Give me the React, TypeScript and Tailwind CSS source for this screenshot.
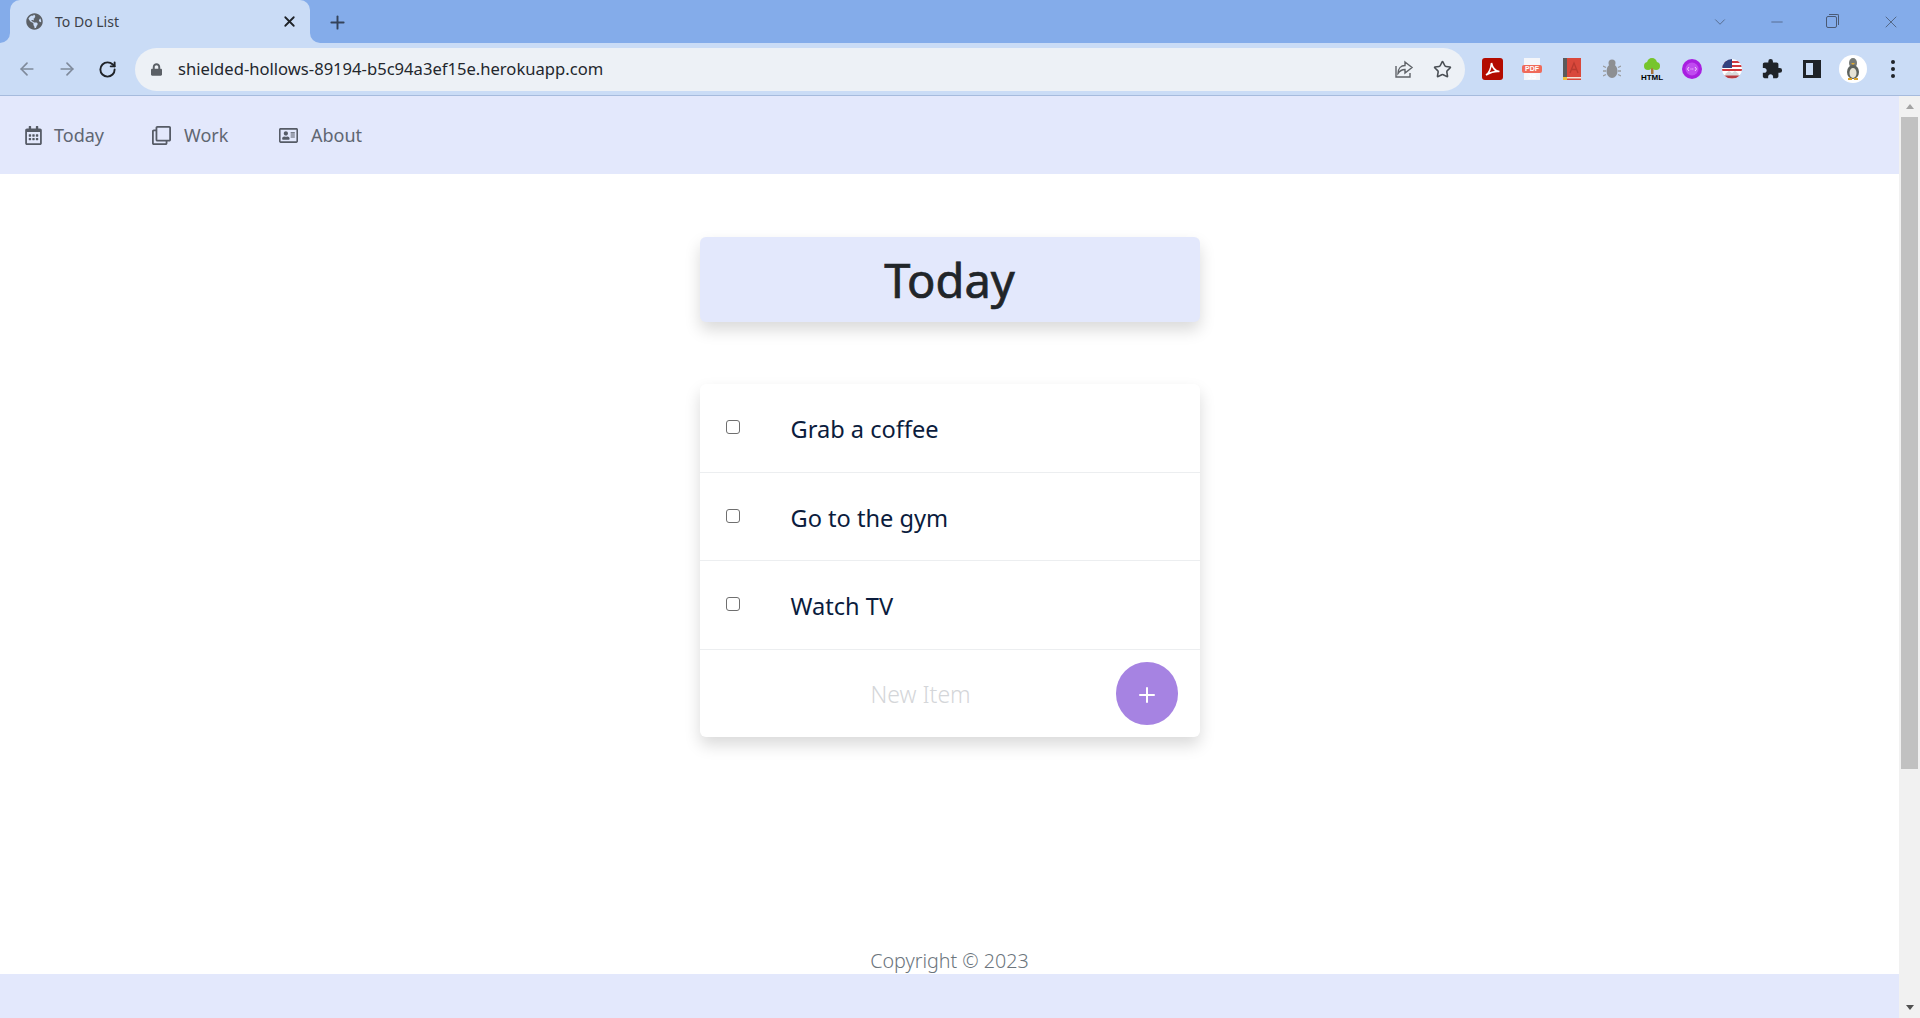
import { FaRegCalendarAlt, FaRegClone, FaRegAddressCard, FaGlobeAmericas, FaLock } from 'react-icons/fa'
import { MdExtension } from 'react-icons/md'
import { ArrowLeft, ArrowRight, RotateCw, X, Plus, Star, ChevronDown, Minus } from 'lucide-react'

const navItems = [
  { label: 'Today', icon: FaRegCalendarAlt, width: 'w-[128px]', gap: 'ml-[11px]' },
  { label: 'Work', icon: FaRegClone, width: 'w-[127px]', gap: 'ml-[13px]' },
  { label: 'About', icon: FaRegAddressCard, width: 'w-auto', gap: 'ml-[13px]' },
]

const todos = ['Grab a coffee', 'Go to the gym', 'Watch TV']

function ExtensionIcons() {
  return (
    <div className="flex items-center">
      {/* pdf */}
      <span className="w-10 flex justify-center">
        <svg width="21" height="22" viewBox="0 0 21 22">
          <rect width="21" height="22" rx="3" fill="#b30b00" />
          <path d="M4 17c3-2 5-7 5.500-12 1 5 3 8 8 8.500-5-.5-9 1-13.500 3.500z" fill="none" stroke="#fff" strokeWidth="1.600" />
        </svg>
      </span>
      <span className="w-10 flex justify-center">
        <span className="relative w-[16px] h-[22px] bg-[#f4f6fa] flex items-center justify-center">
          <span className="absolute left-[-2px] right-[-2px] top-[7px] h-[8px] rounded-[2px] bg-[#ef6a5a] text-white text-[7px] leading-[8px] font-bold text-center font-['Liberation_Sans',sans-serif]">PDF JS</span>
        </span>
      </span>
      <span className="w-10 flex justify-center">
        <svg width="18" height="22" viewBox="0 0 18 22">
          <rect width="18" height="22" fill="#d9483b" />
          <rect width="4" height="20" fill="#5b5b5b" />
          <rect x="4" y="19" width="14" height="1.500" fill="#f4e3d8" />
          <rect y="19" width="4" height="3" fill="#f0c23a" />
          <path d="M7 15l4-10 4 10M8.500 11.500h5" fill="none" stroke="#b93a2f" strokeWidth="1.300" />
        </svg>
      </span>
      <span className="w-10 flex justify-center">
        <svg width="18" height="20" viewBox="0 0 18 20">
          <circle cx="9" cy="4" r="3.500" fill="#8d8f92" />
          <ellipse cx="9" cy="12" rx="5.500" ry="7" fill="#8d8f92" />
          <path d="M0 7l3 1.500M0 12h3M0 17l3-1.500M18 7l-3 1.500M18 12h-3M18 17l-3-1.500" stroke="#9a9c9f" strokeWidth="1.300" />
        </svg>
      </span>
      <span className="w-10 flex flex-col items-center">
        <svg width="20" height="16" viewBox="0 0 20 16">
          <rect x="9" y="8" width="2.500" height="8" fill="#a9743a" />
          <circle cx="10" cy="5" r="5" fill="#76c52c" />
          <circle cx="6" cy="8" r="4" fill="#76c52c" />
          <circle cx="14" cy="8" r="4" fill="#76c52c" />
        </svg>
        <span className="text-[8px] leading-[7px] font-bold text-black font-['Liberation_Sans',sans-serif]">HTML</span>
      </span>
      <span className="w-10 flex justify-center">
        <svg width="20" height="20" viewBox="0 0 20 20">
          <circle cx="10" cy="10" r="10" fill="#a81fe0" />
          <circle cx="10" cy="10" r="6.500" fill="#c04cf0" />
          <path d="M7 8l-1.500 2L7 12M13 8l1.500 2-1.500 2" fill="none" stroke="#f1d3fb" strokeWidth="1" />
          <path d="M8.500 10h3" stroke="#f1d3fb" strokeWidth="1" strokeDasharray="1 .8" />
        </svg>
      </span>
      <span className="w-10 flex justify-center">
        <svg width="20" height="20" viewBox="0 0 20 20">
          <clipPath id="flag"><circle cx="10" cy="10" r="10" /></clipPath>
          <g clipPath="url(#flag)">
            <rect width="20" height="20" fill="#fff" />
            <path d="M0 3h20M0 7h20M0 11h20" stroke="#d03a3f" strokeWidth="2" />
            <rect width="10" height="9" fill="#33427f" />
            <path d="M3 15l4-3 3 2 3-2 4 3-3 4H6z" fill="#d9d9d9" />
            <path d="M0 18h20" stroke="#b83a40" strokeWidth="3" />
          </g>
        </svg>
      </span>
      <span className="w-10 flex justify-center">
        <MdExtension className="w-[22px] h-[22px] text-[#1f2328]" />
      </span>
      <span className="w-10 flex justify-center">
        <span className="w-[18px] h-[18px] border-[3px] border-r-[8px] border-[#1f2328] bg-[#cadcf6]" />
      </span>
      <span className="w-10 flex justify-center pl-[2px]">
        <span className="w-7 h-7 rounded-full bg-white flex items-center justify-center">
          <svg width="14" height="22" viewBox="0 0 14 22">
            <ellipse cx="7" cy="5" rx="4" ry="5" fill="#777b77" />
            <ellipse cx="7" cy="14" rx="6" ry="7" fill="#5d625e" />
            <ellipse cx="7" cy="15" rx="3.500" ry="5" fill="#e6e3d6" />
            <path d="M5 5h4l-2 2z" fill="#e0a92e" />
            <path d="M2 21h4M8 21h4" stroke="#d9a22c" strokeWidth="2" />
          </svg>
        </span>
      </span>
      <span className="w-10 flex flex-col items-center gap-[3px] pl-[1px]">
        <span className="w-1 h-1 rounded-full bg-[#1f2328]" />
        <span className="w-1 h-1 rounded-full bg-[#1f2328]" />
        <span className="w-1 h-1 rounded-full bg-[#1f2328]" />
      </span>
    </div>
  )
}

function BrowserChrome() {
  return (
    <div className="shrink-0 font-['Noto_Sans',sans-serif]">
      {/* Tab strip */}
      <div className="h-[43px] bg-[#84acea] flex items-end pl-[10px]">
        <div className="relative w-[300px] h-[43px] bg-[#cadcf6] rounded-t-[10px] flex items-center pl-[16px] pr-[12px]">
          <div className="absolute left-[-10px] bottom-0 w-[10px] h-[10px] bg-[#cadcf6]">
            <div className="w-full h-full bg-[#84acea] rounded-br-[10px]" />
          </div>
          <div className="absolute right-[-10px] bottom-0 w-[10px] h-[10px] bg-[#cadcf6]">
            <div className="w-full h-full bg-[#84acea] rounded-bl-[10px]" />
          </div>
          <FaGlobeAmericas className="w-[17px] h-[17px] text-[#5b6066] shrink-0" />
          <span className="ml-[12px] mb-[1px] text-[14px] text-[#3c4148] flex-1">To Do List</span>
          <X className="w-[17px] h-[17px] text-[#1f2328]" strokeWidth={2.5} />
        </div>
        <Plus className="ml-[17px] mb-[10px] w-[21px] h-[21px] text-[#34435a]" strokeWidth={2.2} />
        <div className="flex-1" />
        <div className="h-[43px] flex items-center text-[#4a5a75]">
          <ChevronDown className="w-[18px] h-[18px] mr-[39px]" strokeWidth={1} />
          <Minus className="w-[18px] h-[18px] mr-[40px]" strokeWidth={1} />
          <span className="relative w-[11px] h-[12px] mr-[44px] border border-[#4a5a75] rounded-[2px]">
            <span className="absolute top-[-3px] right-[-3px] w-[10px] h-[11px] border-t border-r border-[#4a5a75] rounded-tr-[2px]" />
          </span>
          <X className="w-[20px] h-[20px] mr-[19px]" strokeWidth={1} />
        </div>
      </div>
      {/* Toolbar */}
      <div className="h-[53px] bg-[#cadcf6] border-b border-[#a6bbdd] flex items-center">
        <div className="w-[135px] pl-[17px] flex items-center shrink-0">
          <ArrowLeft className="w-[20px] h-[20px] text-[#7f8a9b]" strokeWidth={2} />
          <ArrowRight className="ml-[20px] w-[20px] h-[20px] text-[#7f8a9b]" strokeWidth={2} />
          <RotateCw className="ml-[21px] w-[19px] h-[19px] text-[#1f2328]" strokeWidth={2.4} />
        </div>
        <div className="w-[1330px] h-[43px] rounded-full bg-[#edf1f6] flex items-center pl-[16px] pr-[13px]">
          <FaLock className="w-[11px] h-[13px] text-[#5b6066]" />
          <span className="ml-[16px] mt-[1px] flex-1 text-[16.6px] text-[#23272d]">shielded-hollows-89194-b5c94a3ef15e.herokuapp.com</span>
          <svg width="20" height="20" viewBox="0 0 20 20" fill="none" stroke="#5f6368" strokeWidth="1.400" className="mr-[19px]">
            <path d="M2 7v11h14v-4" />
            <path d="M11 3l7 5.500-7 5.500v-3.500c-3 0-5 1-7 4 0-5 3-8 7-8z" />
          </svg>
          <Star className="w-[19px] h-[19px] text-[#4a4f55]" strokeWidth={2} />
        </div>
        <div className="ml-[7px]">
          <ExtensionIcons />
        </div>
      </div>
    </div>
  )
}

function TodoPage() {
  return (
    <div className="flex-1 flex flex-col min-w-0 bg-white font-['Noto_Sans',sans-serif]">
      {/* Navbar */}
      <nav className="h-[78px] shrink-0 bg-[#e3e8fc] flex items-center pl-[24px] text-[18px] text-[#5f6672]">
        {navItems.map((item) => (
          <div key={item.label} className={`flex items-center ${item.width}`}>
            <item.icon className="w-[19px] h-[19px] text-[#565b66]" />
            <span className={item.gap}>{item.label}</span>
          </div>
        ))}
      </nav>

      <main className="flex-1 flex flex-col items-center pt-[63px]">
        {/* Heading */}
        <div className="w-[500px] h-[85px] rounded-[6px] bg-[#e3e8fc] shadow-[0_8px_16px_rgba(0,0,0,0.15)] flex items-center justify-center">
          <h1 className="mt-[2px] text-[47px] font-normal [-webkit-text-stroke:0.7px_#212529] text-[#212529] leading-none">Today</h1>
        </div>

        {/* List */}
        <div className="mt-[62px] w-[500px] rounded-[6px] bg-white shadow-[0_8px_16px_rgba(0,0,0,0.15)]">
          {todos.map((todo) => (
            <div key={todo} className="h-[88.5px] border-b border-[#eceef0] flex items-center pl-[26px]">
              <span className="w-[14px] h-[14px] mb-[1px] rounded-[3px] border border-[#6f6f6f] bg-white shrink-0" />
              <span className="ml-[51px] mt-[4px] text-[23.6px] text-[#0b1c3d]">{todo}</span>
            </div>
          ))}
          <div className="h-[87px] flex items-center relative">
            <span className="ml-[171px] mt-[3px] text-[23px] font-light text-[#d4d6d9]">New Item</span>
            <button className="absolute right-[22px] top-[12px] w-[62px] h-[63px] rounded-full bg-[#a683e2] flex items-center justify-center">
              <Plus className="w-[24px] h-[24px] mt-[3px] text-white" strokeWidth={2} />
            </button>
          </div>
        </div>

        <div className="mt-auto text-[19.7px] leading-[27px] text-[#6c757d] font-light">Copyright © 2023</div>
      </main>

      <footer className="h-[44px] shrink-0 bg-[#e3e8fc]" />
    </div>
  )
}

function Scrollbar() {
  return (
    <div className="w-[21px] shrink-0 bg-[#f1f1f1] flex flex-col items-center">
      <div className="h-[21px] flex items-center justify-center">
        <span className="w-0 h-0 border-x-[4px] border-x-transparent border-b-[5px] border-b-[#a3a3a3]" />
      </div>
      <div className="w-[17px] h-[652px] bg-[#c1c1c1]" />
      <div className="flex-1" />
      <div className="h-[21px] flex items-center justify-center">
        <span className="w-0 h-0 border-x-[4px] border-x-transparent border-t-[5px] border-t-[#505050]" />
      </div>
    </div>
  )
}

export default function App() {
  return (
    <div className="h-screen flex flex-col overflow-hidden">
      <BrowserChrome />
      <div className="flex-1 flex min-h-0">
        <TodoPage />
        <Scrollbar />
      </div>
    </div>
  )
}
